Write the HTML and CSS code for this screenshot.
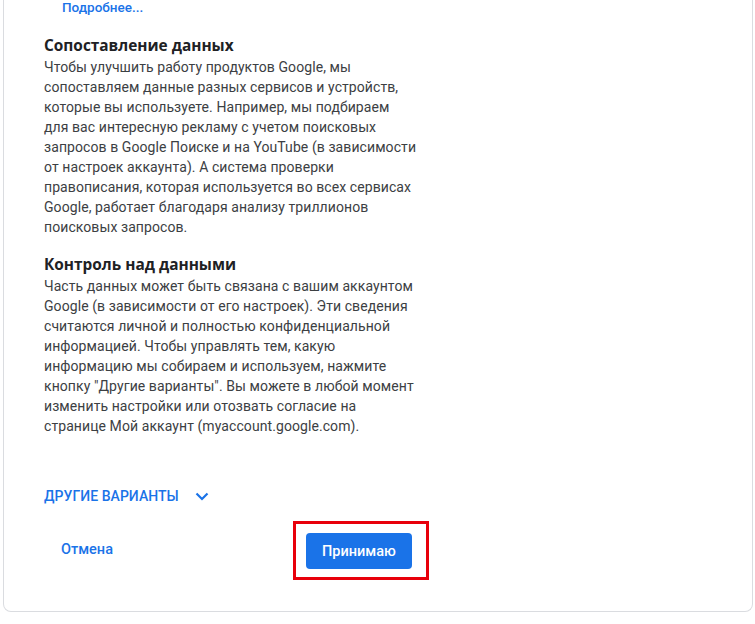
FILE: index.html
```html
<!DOCTYPE html>
<html lang="ru">
<head>
<meta charset="utf-8">
<link rel="stylesheet" href="styles.css">
</head>
<body>
<div class="card">
  <a class="more" href="#">Подробнее...</a>
  <h2 class="title">Сопоставление данных</h2>
  <p class="text">Чтобы улучшить работу продуктов Google, мы<br>сопоставляем данные разных сервисов и устройств,<br>которые вы используете. Например, мы подбираем<br>для вас интересную рекламу с учетом поисковых<br>запросов в Google Поиске и на YouTube (в зависимости<br>от настроек аккаунта). А система проверки<br>правописания, которая используется во всех сервисах<br>Google, работает благодаря анализу триллионов<br>поисковых запросов.</p>
  <h2 class="title second">Контроль над данными</h2>
  <p class="text">Часть данных может быть связана с вашим аккаунтом<br>Google (в зависимости от его настроек). Эти сведения<br>считаются личной и полностью конфиденциальной<br>информацией. Чтобы управлять тем, какую<br>информацию мы собираем и используем, нажмите<br>кнопку "Другие варианты". Вы можете в любой момент<br>изменить настройки или отозвать согласие на<br>странице Мой аккаунт (myaccount.google.com).</p>
  <div class="options">
    <span class="options-label">ДРУГИЕ ВАРИАНТЫ</span>
    <svg class="chevron" width="14" height="9" viewBox="0 0 14 9"><path d="M1.5 1.5 L7 7 L12.5 1.5" fill="none" stroke="#1a73e8" stroke-width="2.2"/></svg>
  </div>
  <div class="actions">
    <a class="cancel" href="#">Отмена</a>
    <div class="highlight">
      <button class="accept">Принимаю</button>
    </div>
  </div>
</div>
</body>
</html>
```
FILE: styles.css
```css
html, body {
  margin: 0;
  padding: 0;
  background: #fff;
}
body {
  font-family: Roboto, "Liberation Sans", Arial, sans-serif;
  color: #202124;
}
.card {
  margin-left: 3px;
  width: 750px;
  border: 1px solid #dadce0;
  border-top: none;
  border-radius: 0 0 8px 8px;
  padding: 0 0 31px 40px;
  box-sizing: border-box;
  margin-top: -3px;
}
.more {
  display: block;
  margin-left: 18px;
  font-size: 13.5px;
  font-weight: 500;
  line-height: 20px;
  color: #1a73e8;
  text-decoration: none;
}
.title {
  margin: 18px 0 0 0;
  font-family: "Open Sans", Lato, sans-serif;
  font-weight: 700;
  font-size: 15.4px;
  line-height: 22px;
  color: #202124;
}
.title.second {
  margin-top: 17px;
}
.text {
  margin: 0;
  white-space: nowrap;
  font-size: 14px;
  letter-spacing: 0.08px;
  line-height: 20px;
  color: #3c4043;
}
.options {
  display: flex;
  align-items: center;
  margin-top: 49px;
  height: 22px;
}
.options-label {
  font-size: 14px;
  font-weight: 500;
  color: #1a73e8;
  letter-spacing: 0.05px;
}
.chevron {
  margin-left: 16px;
  margin-top: 1px;
}
.actions {
  display: flex;
  align-items: center;
  margin-top: 14px;
}
.cancel {
  margin-left: 17px;
  margin-top: -3px;
  font-size: 14.5px;
  font-weight: 500;
  color: #1a73e8;
  text-decoration: none;
}
.highlight {
  margin-left: 180px;
  border: 3px solid #e8000b;
  padding: 9px 14px 8px 10px;
}
.accept {
  display: block;
  width: 106px;
  height: 36px;
  border: none;
  border-radius: 4px;
  background: #1a73e8;
  color: #fff;
  font-family: Roboto, "Liberation Sans", Arial, sans-serif;
  font-size: 14.5px;
  font-weight: 500;
  padding: 0;
}
```
